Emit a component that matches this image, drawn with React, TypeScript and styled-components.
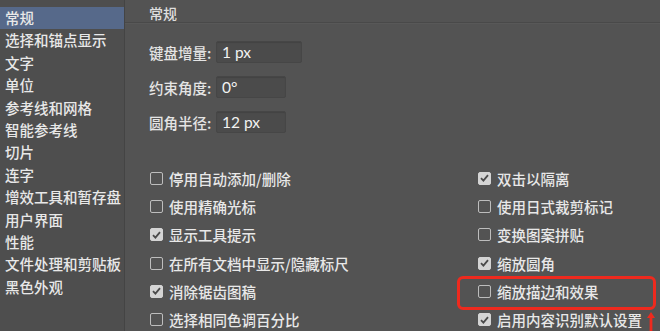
import React from 'react'
import styled, { createGlobalStyle } from 'styled-components'

const GlobalStyle = createGlobalStyle`
  html, body {
    margin: 0;
    padding: 0;
    background: #535353;
  }
  * {
    box-sizing: border-box;
  }
`

const CJK = `"Noto Sans CJK SC", "Noto Sans", sans-serif`

const sections = [
  '常规',
  '选择和锚点显示',
  '文字',
  '单位',
  '参考线和网格',
  '智能参考线',
  '切片',
  '连字',
  '增效工具和暂存盘',
  '用户界面',
  '性能',
  '文件处理和剪贴板',
  '黑色外观',
]

const fields = [
  { label: '键盘增量:', value: '1 px', width: 86 },
  { label: '约束角度:', value: '0°', width: 70 },
  { label: '圆角半径:', value: '12 px', width: 70 },
]

const options = [
  { text: '停用自动添加/删除', checked: false },
  { text: '双击以隔离', checked: true },
  { text: '使用精确光标', checked: false },
  { text: '使用日式裁剪标记', checked: false },
  { text: '显示工具提示', checked: true },
  { text: '变换图案拼贴', checked: false },
  { text: '在所有文档中显示/隐藏标尺', checked: false },
  { text: '缩放圆角', checked: true },
  { text: '消除锯齿图稿', checked: true },
  { text: '缩放描边和效果', checked: false, marked: true },
  { text: '选择相同色调百分比', checked: false },
  { text: '启用内容识别默认设置', checked: true },
]

const Window = styled.div`
  position: relative;
  display: flex;
  width: 660px;
  height: 331px;
  overflow: hidden;
  background: #535353;
  font-family: ${CJK};
  font-weight: 500;
  color: #e4e4e4;
`

const Sidebar = styled.ul`
  width: 125px;
  flex-shrink: 0;
  margin: 0;
  padding: 7px 0 0;
  list-style: none;
  background: #4e4e4e;
  border-right: 1px solid #444;
`

const NavItem = styled.li<{ $active?: boolean }>`
  height: 22.4px;
  line-height: 22.4px;
  padding-left: 5px;
  font-size: 14.5px;
  white-space: nowrap;
  color: #e8e8e8;
  background: ${(p) => (p.$active ? '#56698a' : 'transparent')};
`

const Panel = styled.div`
  flex: 1;
  display: flex;
  flex-direction: column;
`

const Header = styled.div`
  height: 24px;
  padding: 4px 0 0 24px;
  font-size: 14px;
  line-height: 18px;
  color: #dedede;
  border-bottom: 1px solid #494949;
  box-shadow: 0 1px 0 #585858;
`

const Fields = styled.div`
  display: flex;
  flex-direction: column;
  gap: 13px;
  margin-top: 18px;
  padding-left: 24px;
`

const FieldRow = styled.div`
  display: flex;
  align-items: center;
  gap: 5px;
`

const Label = styled.span`
  width: 62px;
  font-size: 14.5px;
  white-space: nowrap;
  color: #e4e4e4;
`

const Input = styled.div<{ $width: number }>`
  width: ${(p) => p.$width}px;
  height: 22px;
  padding-left: 5px;
  line-height: 20px;
  font-family: Lato, "Liberation Sans", sans-serif;
  font-size: 15.5px;
  font-weight: 400;
  color: #f2f2f2;
  background: #4b4b4b;
  border: 1px solid #464646;
  border-radius: 2px;
  box-shadow: inset 0 1px 1px rgba(0, 0, 0, 0.12);
`

const Options = styled.div`
  display: grid;
  grid-template-columns: 328px 1fr;
  grid-auto-rows: 28.3px;
  margin-top: 31px;
  padding-left: 25px;
`

const Option = styled.label`
  position: relative;
  display: flex;
  align-items: center;
  gap: 6px;
  font-size: 14.5px;
  white-space: nowrap;
  color: #e8e8e8;
`

const Box = styled.span<{ $checked: boolean }>`
  display: flex;
  align-items: center;
  justify-content: center;
  width: 13px;
  height: 13px;
  border-radius: 2px;
  border: 1.5px solid ${(p) => (p.$checked ? '#d4d4d4' : '#bdbdbd')};
  background: ${(p) => (p.$checked ? '#d4d4d4' : 'transparent')};
`

const Highlight = styled.span`
  position: absolute;
  left: -21px;
  top: -1px;
  width: 199px;
  height: 34px;
  border: 3px solid #ee2a1e;
  border-radius: 6px;
  pointer-events: none;
`

const Arrow = styled.svg`
  position: absolute;
  left: 646px;
  top: 312px;
`

const Check = () => (
  <svg width="9" height="8" viewBox="0 0 9 8">
    <path d="M1 4.2 L3.4 6.6 L8 1.2" fill="none" stroke="#4a4a4a" strokeWidth="1.8" />
  </svg>
)

export default function App() {
  return (
    <>
      <GlobalStyle />
      <Window>
        <Sidebar>
          {sections.map((s, i) => (
            <NavItem key={s} $active={i === 0}>
              {s}
            </NavItem>
          ))}
        </Sidebar>
        <Panel>
          <Header>常规</Header>
          <Fields>
            {fields.map((f) => (
              <FieldRow key={f.label}>
                <Label>{f.label}</Label>
                <Input $width={f.width}>{f.value}</Input>
              </FieldRow>
            ))}
          </Fields>
          <Options>
            {options.map((o) => (
              <Option key={o.text}>
                <Box $checked={o.checked}>{o.checked && <Check />}</Box>
                {o.text}
                {o.marked && <Highlight />}
              </Option>
            ))}
          </Options>
        </Panel>
        <Arrow width="10" height="19" viewBox="0 0 10 19">
          <path d="M5 0 L9 6 L6.4 6 L6.4 19 L3.6 19 L3.6 6 L1 6 Z" fill="#ee2a1e" />
        </Arrow>
      </Window>
    </>
  )
}
